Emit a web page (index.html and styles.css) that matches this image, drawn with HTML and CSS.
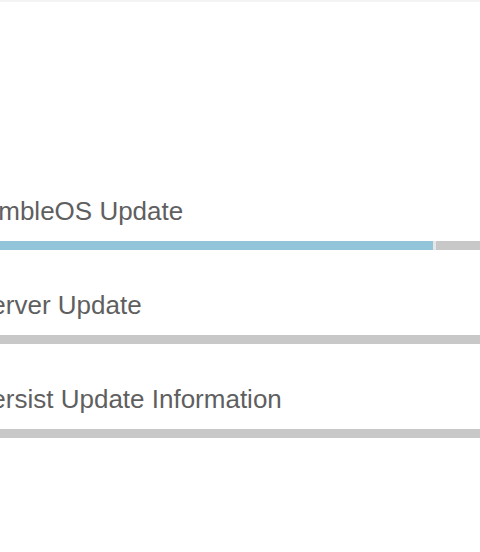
FILE: index.html
```html
<!DOCTYPE html>
<html lang="en">
<head>
    <meta charset="UTF-8">
    <meta name="viewport" content="width=device-width, initial-scale=1.0">
    <title>Updates</title>
    <link rel="stylesheet" href="styles.css">
</head>
<body>
    <div class="updates">
        <div class="task">
            <div class="task-label task-label-wide">RumbleOS Update</div>
            <div class="bar"><div class="bar-fill" style="width: 459px"></div></div>
        </div>
        <div class="task">
            <div class="task-label">Server Update</div>
            <div class="bar"></div>
        </div>
        <div class="task">
            <div class="task-label">Persist Update Information</div>
            <div class="bar"></div>
        </div>
    </div>
</body>
</html>
```
FILE: styles.css
```css
body {
    font-family: "Liberation Sans", Arial, sans-serif;
    margin: 0;
    background: #fff;
    overflow: hidden;
}
.updates {
    border-top: 2px solid #f3f3f3;
    margin-left: -26px;
    padding-top: 194px;
    display: flex;
    flex-direction: column;
    gap: 40px;
}
.task {
    display: flex;
    flex-direction: column;
    gap: 15px;
}
.task-label {
    font-size: 26px;
    line-height: 30px;
    color: #5f5f5f;
}
.task-label-wide {
    margin-left: -9px;
}
.bar {
    width: 560px;
    height: 9px;
    background: #c8c8c8;
    display: flex;
}
.bar-fill {
    background: #93c5da;
    border-right: 3px solid #e6e6e6;
}
```
